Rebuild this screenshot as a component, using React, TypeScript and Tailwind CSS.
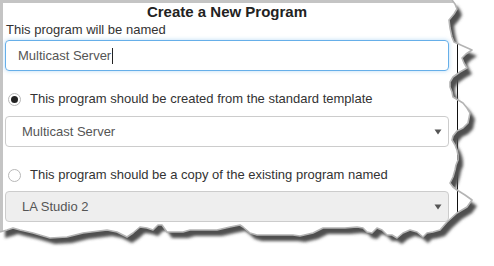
import React from "react";

// torn paper outline (right edge, then bottom edge right-to-left)
const tear: [number, number][] = [
  [452, 0], [455, 4], [457, 9], [454, 14], [449, 20], [450, 28], [452, 37], [454, 42],
  [463, 46], [472, 50], [466, 54], [462, 58], [464, 63], [467, 68], [460, 72], [453, 77],
  [450, 82], [450, 87], [452, 92], [453, 97], [458, 100], [463, 103], [467, 108], [470, 113],
  [469, 118], [468, 123], [463, 128], [457, 131], [453, 136], [452, 140], [455, 145], [457, 150],
  [458, 155], [458, 160], [456, 165], [455, 170], [453, 177], [450, 183], [453, 187], [457, 190],
  [465, 195], [472, 200], [467, 207], [457, 213], [447, 222], [440, 230], [433, 232], [427, 233],
  [423, 237], [417, 232], [410, 230], [403, 233], [397, 238], [392, 235], [387, 235], [382, 230],
  [377, 228], [372, 233], [367, 232], [363, 228], [357, 227], [345, 228], [333, 228], [323, 228],
  [313, 233], [300, 236], [293, 235], [257, 235], [250, 233], [243, 227], [240, 225], [230, 227],
  [217, 230], [190, 230], [183, 232], [167, 232], [162, 225], [158, 225], [153, 230], [147, 228],
  [140, 227], [133, 233], [127, 237], [117, 232], [107, 230], [83, 233], [67, 237], [50, 238],
  [33, 233], [20, 230], [13, 228], [7, 230], [0, 232],
];

const tearLine = tear.map(([x, y], i) => `${i ? "L" : "M"}${x} ${y}`).join(" ");
const paper = `M0 0 ${tearLine.replace(/^M/, "L")} Z`;
const outside = `M0 0 H494 V266 H0 Z ${paper}`;

function Arrow() {
  return (
    <svg width="8" height="6" viewBox="0 0 8 6" className="shrink-0">
      <path d="M0.5 0.5 H7.5 L4 5.5 Z" fill="#555" />
    </svg>
  );
}

function Radio({ checked }: { checked: boolean }) {
  return (
    <span className="flex h-[13px] w-[13px] items-center justify-center rounded-full border border-[#b8b8b8] bg-white">
      {checked && <span className="h-[7px] w-[7px] rounded-full bg-[#222]" />}
    </span>
  );
}

export default function App() {
  return (
    <div className="relative h-[266px] w-[494px] overflow-hidden bg-white font-['Liberation_Sans',Arial,sans-serif] text-[13px] text-[#333]">
      <div className="h-[240px] w-[458px] border-l-[3px] border-t-[3px] border-[#c4c4c4] pl-[2px] pr-[9px]">
        <h1 className="text-center text-[15px] font-bold leading-[17px] text-[#222]">
          Create a New Program
        </h1>
        <div className="pl-[1px] leading-[19px]">This program will be named</div>
        <div className="mt-[1px] flex h-[31px] items-center rounded-[4px] border border-[#66afe9] pl-[12px] text-[#555] shadow-[0_0_4px_rgba(102,175,233,0.45)]">
          Multicast Server
          <span className="ml-[1px] h-[16px] w-px bg-[#222]" />
        </div>

        <label className="mt-[19px] flex items-center gap-[9px] pl-[3px] leading-[18px]">
          <Radio checked />
          This program should be created from the standard template
        </label>
        <div className="mt-[8px] flex h-[31px] items-center justify-between rounded-[4px] border border-[#ccc] pl-[16px] pr-[6px] text-[#555]">
          Multicast Server
          <Arrow />
        </div>

        <label className="mt-[19px] flex items-center gap-[9px] pl-[3px] leading-[18px]">
          <Radio checked={false} />
          This program should be a copy of the existing program named
        </label>
        <div className="mt-[7px] flex h-[31px] items-center justify-between rounded-[4px] border border-[#ccc] bg-[#eee] pl-[16px] pr-[6px] text-[#555]">
          LA Studio 2
          <Arrow />
        </div>
      </div>

      <svg
        className="pointer-events-none absolute inset-0"
        width="494"
        height="266"
        viewBox="0 0 494 266"
      >
        <defs>
          <filter id="blur" x="-10%" y="-10%" width="120%" height="120%">
            <feGaussianBlur stdDeviation="1.8" />
          </filter>
          <clipPath id="out">
            <path d={outside} clipRule="evenodd" />
          </clipPath>
        </defs>
        <path d={outside} fill="#fff" fillRule="evenodd" />
        <line x1="457.5" y1="44" x2="457.5" y2="213" stroke="#111" strokeWidth="1" />
        <g clipPath="url(#out)">
          <path d={paper} transform="translate(5 6)" fill="#4f4f4f" filter="url(#blur)" />
        </g>
        <path d={tearLine} fill="none" stroke="#b4b4b4" strokeWidth="1.6" strokeLinejoin="round" />
      </svg>
    </div>
  );
}
